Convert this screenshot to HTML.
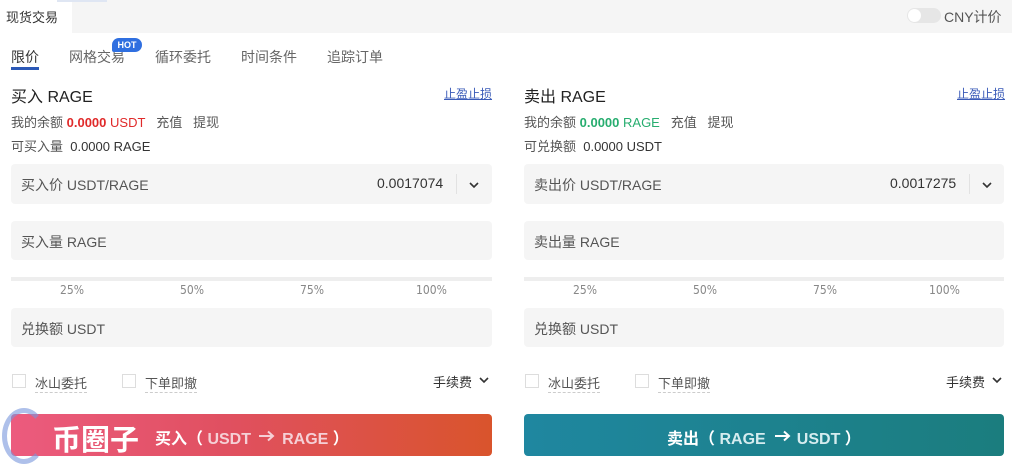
<!DOCTYPE html>
<html><head><meta charset="utf-8"><style>
*{margin:0;padding:0;box-sizing:border-box}
body{width:1012px;height:464px;background:#fff;font-family:"Liberation Sans","Noto Sans CJK SC",sans-serif;color:#333;position:relative;overflow:hidden;font-size:14px}
.a{position:absolute;white-space:nowrap}
.hdr{left:0;top:0;width:1012px;height:33px;background:#f5f5f5}
.inp{position:absolute;background:#f5f5f5;border-radius:4px;height:40px}
.inp span{position:absolute;left:10px;top:11px;font-size:14px;color:#555}
.cb{position:absolute;width:14px;height:14px;border:1px solid #ddd;background:#fff}
.lnk{color:#3a5bb8;text-decoration:underline;font-size:12px}
.pct{font-size:12px;color:#888;font-family:"DejaVu Sans Condensed","Liberation Sans",sans-serif}
svg{position:absolute}
</style></head><body>
<div class="a hdr"></div>
<div class="a" style="left:0;top:0;width:72px;height:33px;background:#fff"></div>
<div class="a" style="left:57px;top:0;width:50px;height:2px;background:#dfe6f3"></div>
<div class="a" style="left:6px;top:7px;font-size:13px;color:#333">现货交易</div>
<div class="a" style="left:907px;top:8px;width:34px;height:15px;border-radius:8px;background:#e6e6e6"></div>
<div class="a" style="left:908px;top:9px;width:13px;height:13px;border-radius:50%;background:#fff"></div>
<div class="a" style="left:944px;top:7px;font-size:14px;color:#555">CNY计价</div>

<div class="a" style="left:11px;top:47px;font-size:14px;color:#333">限价</div>
<div class="a" style="left:11px;top:67px;width:28px;height:3px;background:#2b58b6"></div>
<div class="a" style="left:69px;top:47px;font-size:14px;color:#666">网格交易</div>
<div class="a" style="left:112px;top:38px;width:30px;height:14px;border-radius:7px 7px 7px 2px;background:#2f6fe0;color:#fff;font-size:9px;font-weight:bold;text-align:center;line-height:14px">HOT</div>
<div class="a" style="left:155px;top:47px;font-size:14px;color:#666">循环委托</div>
<div class="a" style="left:241px;top:47px;font-size:14px;color:#666">时间条件</div>
<div class="a" style="left:327px;top:47px;font-size:14px;color:#666">追踪订单</div>

<!-- left -->
<div class="a" style="left:11px;top:83px;font-size:16px;color:#222">买入 RAGE</div>
<div class="a lnk" style="left:444px;top:85px">止盈止损</div>
<div class="a" style="left:11px;top:112px;font-size:13px;color:#555">我的余额 <b style="color:#e02a2a">0.0000</b> <span style="color:#e02a2a">USDT</span>&nbsp;&nbsp; 充值 &nbsp;&nbsp;提现</div>
<div class="a" style="left:11px;top:136px;font-size:13px;color:#555">可买入量 &nbsp;<span style="color:#333">0.0000 RAGE</span></div>
<div class="inp" style="left:11px;top:164px;width:481px"><span>买入价 USDT/RAGE</span><span style="left:366px;color:#333">0.0017074</span><div class="a" style="left:445px;top:10px;width:1px;height:20px;background:#e2e2e2"></div><svg style="left:457px;top:17px" width="12" height="8"><path d="M2 2 L6 6 L10 2" fill="none" stroke="#333" stroke-width="1.6"/></svg></div>
<div class="inp" style="left:11px;top:221px;width:481px;height:39px"><span>买入量 RAGE</span></div>
<div class="a" style="left:11px;top:277px;width:481px;height:4px;background:#eee"></div>
<div class="a pct" style="left:60px;top:283px">25%</div>
<div class="a pct" style="left:180px;top:283px">50%</div>
<div class="a pct" style="left:300px;top:283px">75%</div>
<div class="a pct" style="left:416px;top:283px">100%</div>
<div class="inp" style="left:11px;top:308px;width:481px;height:39px"><span>兑换额 USDT</span></div>
<div class="cb" style="left:12px;top:374px"></div>
<div class="a" style="left:35px;top:373px;font-size:13px;color:#555;border-bottom:1px dashed #ccc">冰山委托</div>
<div class="cb" style="left:122px;top:374px"></div>
<div class="a" style="left:145px;top:373px;font-size:13px;color:#555;border-bottom:1px dashed #ccc">下单即撤</div>
<div class="a" style="left:433px;top:372px;font-size:13px;color:#333">手续费</div>
<svg style="left:478px;top:376px" width="12" height="8"><path d="M2 2 L6 6 L10 2" fill="none" stroke="#333" stroke-width="1.6"/></svg>
<div class="a" style="left:11px;top:414px;width:481px;height:42px;border-radius:4px;background:linear-gradient(90deg,#ec5b7e,#e05060 45%,#d9542c)"></div>
<div class="a" style="left:2px;top:408px;width:44px;height:56px;border-radius:50%;border:5px solid rgba(120,150,220,.6);border-right-color:transparent"></div>
<div class="a" style="left:52px;top:417px;font-size:29px;font-weight:bold;color:#fff">币圈子</div>
<div class="a" style="left:155px;top:425px;font-size:16px;font-weight:bold;color:#fff">买入（ <span style="color:#f5d0d6">USDT&nbsp;&nbsp;&nbsp;&nbsp;&nbsp;&nbsp; RAGE</span> ）</div>
<svg style="left:258px;top:430px" width="18" height="12"><path d="M1 6 H15 M10 1.5 L15 6 L10 10.5" fill="none" stroke="#f5d0d6" stroke-width="2"/></svg>

<!-- right -->
<div class="a" style="left:524px;top:83px;font-size:16px;color:#222">卖出 RAGE</div>
<div class="a lnk" style="left:957px;top:85px">止盈止损</div>
<div class="a" style="left:524px;top:112px;font-size:13px;color:#555">我的余额 <b style="color:#27ad6f">0.0000</b> <span style="color:#27ad6f">RAGE</span>&nbsp;&nbsp; 充值 &nbsp;&nbsp;提现</div>
<div class="a" style="left:524px;top:136px;font-size:13px;color:#555">可兑换额 &nbsp;<span style="color:#333">0.0000 USDT</span></div>
<div class="inp" style="left:524px;top:164px;width:480px"><span>卖出价 USDT/RAGE</span><span style="left:366px;color:#333">0.0017275</span><div class="a" style="left:445px;top:10px;width:1px;height:20px;background:#e2e2e2"></div><svg style="left:457px;top:17px" width="12" height="8"><path d="M2 2 L6 6 L10 2" fill="none" stroke="#333" stroke-width="1.6"/></svg></div>
<div class="inp" style="left:524px;top:221px;width:480px;height:39px"><span>卖出量 RAGE</span></div>
<div class="a" style="left:524px;top:277px;width:480px;height:4px;background:#eee"></div>
<div class="a pct" style="left:573px;top:283px">25%</div>
<div class="a pct" style="left:693px;top:283px">50%</div>
<div class="a pct" style="left:813px;top:283px">75%</div>
<div class="a pct" style="left:929px;top:283px">100%</div>
<div class="inp" style="left:524px;top:308px;width:480px;height:39px"><span>兑换额 USDT</span></div>
<div class="cb" style="left:525px;top:374px"></div>
<div class="a" style="left:548px;top:373px;font-size:13px;color:#555;border-bottom:1px dashed #ccc">冰山委托</div>
<div class="cb" style="left:635px;top:374px"></div>
<div class="a" style="left:658px;top:373px;font-size:13px;color:#555;border-bottom:1px dashed #ccc">下单即撤</div>
<div class="a" style="left:946px;top:372px;font-size:13px;color:#333">手续费</div>
<svg style="left:991px;top:376px" width="12" height="8"><path d="M2 2 L6 6 L10 2" fill="none" stroke="#333" stroke-width="1.6"/></svg>
<div class="a" style="left:524px;top:414px;width:480px;height:42px;border-radius:4px;background:linear-gradient(90deg,#1f87a0,#1b7d7e)"></div>
<div class="a" style="left:667px;top:425px;font-size:16px;font-weight:bold;color:#fff">卖出（ <span style="color:#d5ecef">RAGE&nbsp;&nbsp;&nbsp;&nbsp;&nbsp;&nbsp; USDT</span> ）</div>
<svg style="left:774px;top:430px" width="18" height="12"><path d="M1 6 H15 M10 1.5 L15 6 L10 10.5" fill="none" stroke="#fff" stroke-width="2"/></svg>
</body></html>
